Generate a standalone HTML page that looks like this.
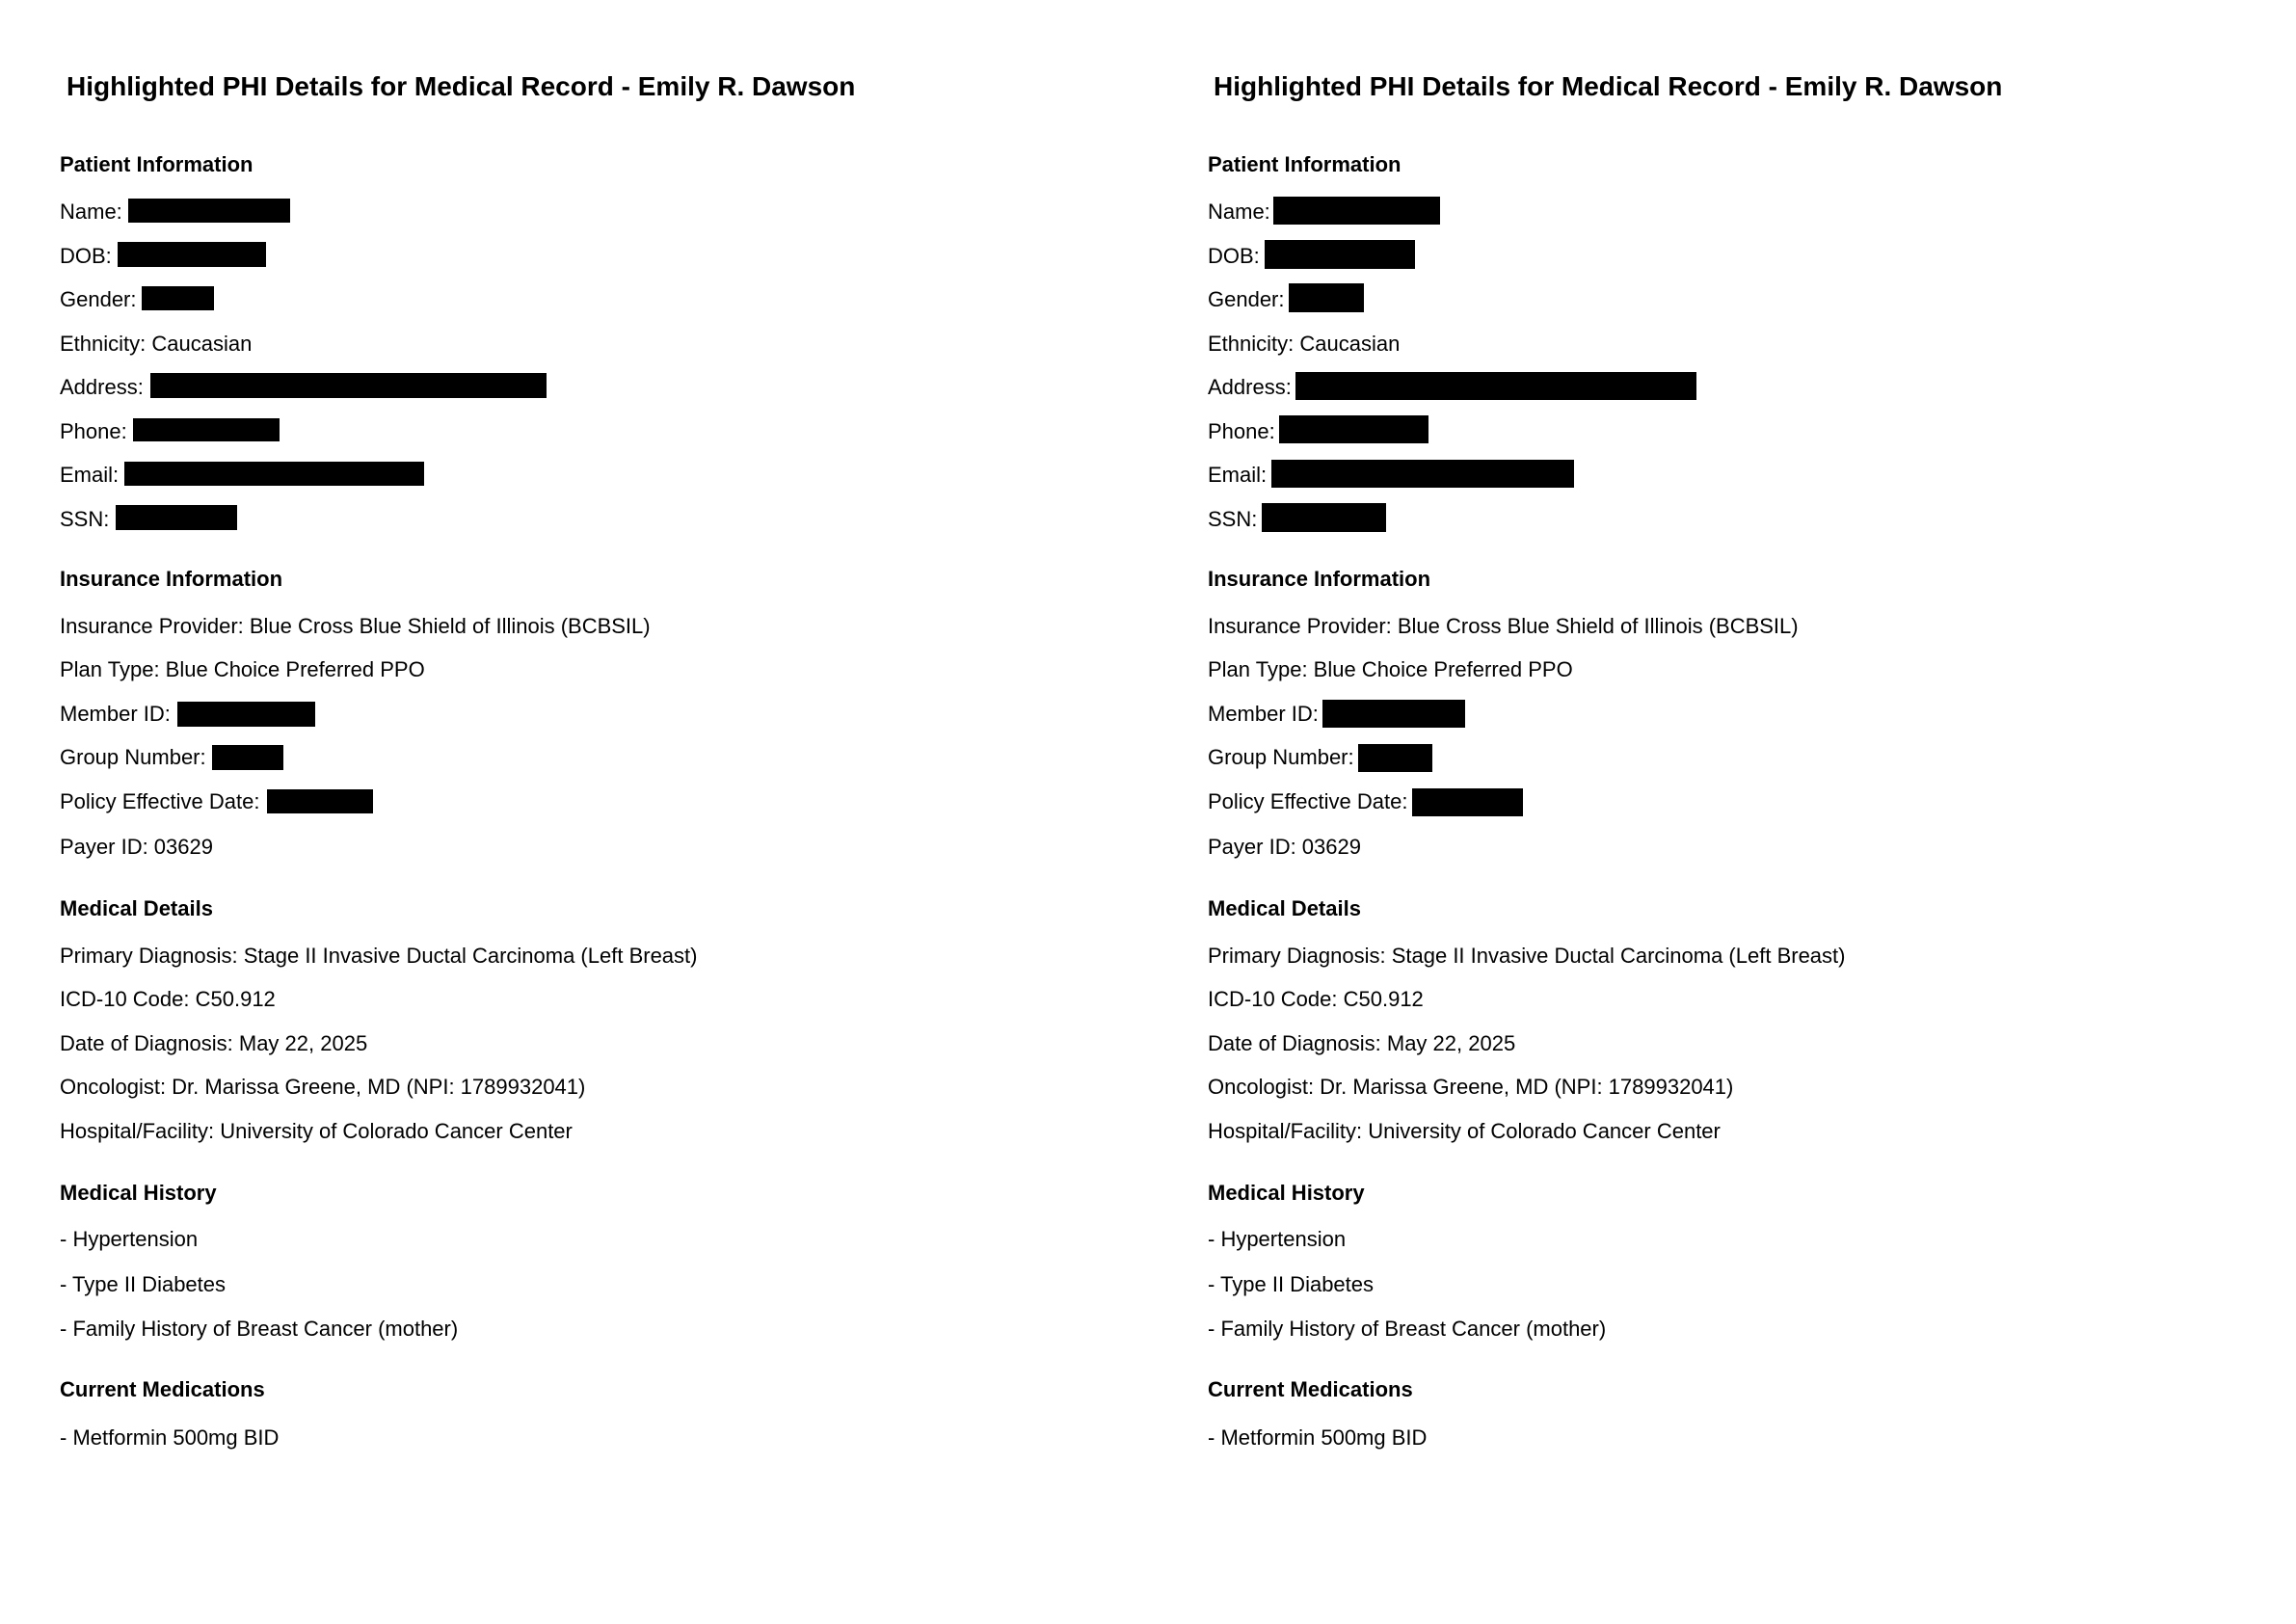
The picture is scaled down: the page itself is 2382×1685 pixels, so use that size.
<!DOCTYPE html>
<html><head><meta charset="utf-8"><style>
html,body{margin:0;padding:0;background:#fff;}
body{width:2382px;height:1685px;position:relative;overflow:hidden;font-family:"Liberation Sans",Arial,sans-serif;color:#000;}
.t{position:absolute;white-space:nowrap;font-size:22px;line-height:26px;height:26px;}
.h{font-weight:bold;}
.ti{position:absolute;white-space:nowrap;font-size:28px;font-weight:bold;line-height:32px;}
.b{position:absolute;background:#000;}
</style></head><body>

<!-- LEFT -->
<div class="ti" style="left:69px;top:74px">Highlighted PHI Details for Medical Record - Emily R. Dawson</div>
<div class="t h" style="left:62px;top:158px">Patient Information</div>
<div class="t" style="left:62px;top:207px">Name:</div>
<div class="t" style="left:62px;top:253px">DOB:</div>
<div class="t" style="left:62px;top:298px">Gender:</div>
<div class="t" style="left:62px;top:344px">Ethnicity: Caucasian</div>
<div class="t" style="left:62px;top:389px">Address:</div>
<div class="t" style="left:62px;top:435px">Phone:</div>
<div class="t" style="left:62px;top:480px">Email:</div>
<div class="t" style="left:62px;top:526px">SSN:</div>
<div class="b" style="left:133px;top:206px;width:168px;height:25px"></div>
<div class="b" style="left:122px;top:251px;width:154px;height:26px"></div>
<div class="b" style="left:147px;top:297px;width:75px;height:25px"></div>
<div class="b" style="left:156px;top:387px;width:411px;height:26px"></div>
<div class="b" style="left:138px;top:434px;width:152px;height:24px"></div>
<div class="b" style="left:129px;top:479px;width:311px;height:25px"></div>
<div class="b" style="left:120px;top:524px;width:126px;height:26px"></div>

<div class="t h" style="left:62px;top:588px">Insurance Information</div>
<div class="t" style="left:62px;top:637px">Insurance Provider: Blue Cross Blue Shield of Illinois (BCBSIL)</div>
<div class="t" style="left:62px;top:682px">Plan Type: Blue Choice Preferred PPO</div>
<div class="t" style="left:62px;top:728px">Member ID:</div>
<div class="t" style="left:62px;top:773px">Group Number:</div>
<div class="t" style="left:62px;top:819px">Policy Effective Date:</div>
<div class="t" style="left:62px;top:866px">Payer ID: 03629</div>
<div class="b" style="left:184px;top:728px;width:143px;height:26px"></div>
<div class="b" style="left:220px;top:773px;width:74px;height:26px"></div>
<div class="b" style="left:277px;top:819px;width:110px;height:25px"></div>

<div class="t h" style="left:62px;top:930px">Medical Details</div>
<div class="t" style="left:62px;top:979px">Primary Diagnosis: Stage II Invasive Ductal Carcinoma (Left Breast)</div>
<div class="t" style="left:62px;top:1024px">ICD-10 Code: C50.912</div>
<div class="t" style="left:62px;top:1070px">Date of Diagnosis: May 22, 2025</div>
<div class="t" style="left:62px;top:1115px">Oncologist: Dr. Marissa Greene, MD (NPI: 1789932041)</div>
<div class="t" style="left:62px;top:1161px">Hospital/Facility: University of Colorado Cancer Center</div>

<div class="t h" style="left:62px;top:1225px">Medical History</div>
<div class="t" style="left:62px;top:1273px">- Hypertension</div>
<div class="t" style="left:62px;top:1320px">- Type II Diabetes</div>
<div class="t" style="left:62px;top:1366px">- Family History of Breast Cancer (mother)</div>

<div class="t h" style="left:62px;top:1429px">Current Medications</div>
<div class="t" style="left:62px;top:1479px">- Metformin 500mg BID</div>

<!-- RIGHT -->
<div class="ti" style="left:1259px;top:74px">Highlighted PHI Details for Medical Record - Emily R. Dawson</div>
<div class="t h" style="left:1253px;top:158px">Patient Information</div>
<div class="t" style="left:1253px;top:207px">Name:</div>
<div class="t" style="left:1253px;top:253px">DOB:</div>
<div class="t" style="left:1253px;top:298px">Gender:</div>
<div class="t" style="left:1253px;top:344px">Ethnicity: Caucasian</div>
<div class="t" style="left:1253px;top:389px">Address:</div>
<div class="t" style="left:1253px;top:435px">Phone:</div>
<div class="t" style="left:1253px;top:480px">Email:</div>
<div class="t" style="left:1253px;top:526px">SSN:</div>
<div class="b" style="left:1321px;top:204px;width:173px;height:29px"></div>
<div class="b" style="left:1312px;top:249px;width:156px;height:30px"></div>
<div class="b" style="left:1337px;top:294px;width:78px;height:30px"></div>
<div class="b" style="left:1344px;top:386px;width:416px;height:29px"></div>
<div class="b" style="left:1327px;top:431px;width:155px;height:29px"></div>
<div class="b" style="left:1319px;top:477px;width:314px;height:29px"></div>
<div class="b" style="left:1309px;top:522px;width:129px;height:30px"></div>

<div class="t h" style="left:1253px;top:588px">Insurance Information</div>
<div class="t" style="left:1253px;top:637px">Insurance Provider: Blue Cross Blue Shield of Illinois (BCBSIL)</div>
<div class="t" style="left:1253px;top:682px">Plan Type: Blue Choice Preferred PPO</div>
<div class="t" style="left:1253px;top:728px">Member ID:</div>
<div class="t" style="left:1253px;top:773px">Group Number:</div>
<div class="t" style="left:1253px;top:819px">Policy Effective Date:</div>
<div class="t" style="left:1253px;top:866px">Payer ID: 03629</div>
<div class="b" style="left:1372px;top:726px;width:148px;height:29px"></div>
<div class="b" style="left:1409px;top:772px;width:77px;height:29px"></div>
<div class="b" style="left:1465px;top:818px;width:115px;height:29px"></div>

<div class="t h" style="left:1253px;top:930px">Medical Details</div>
<div class="t" style="left:1253px;top:979px">Primary Diagnosis: Stage II Invasive Ductal Carcinoma (Left Breast)</div>
<div class="t" style="left:1253px;top:1024px">ICD-10 Code: C50.912</div>
<div class="t" style="left:1253px;top:1070px">Date of Diagnosis: May 22, 2025</div>
<div class="t" style="left:1253px;top:1115px">Oncologist: Dr. Marissa Greene, MD (NPI: 1789932041)</div>
<div class="t" style="left:1253px;top:1161px">Hospital/Facility: University of Colorado Cancer Center</div>

<div class="t h" style="left:1253px;top:1225px">Medical History</div>
<div class="t" style="left:1253px;top:1273px">- Hypertension</div>
<div class="t" style="left:1253px;top:1320px">- Type II Diabetes</div>
<div class="t" style="left:1253px;top:1366px">- Family History of Breast Cancer (mother)</div>

<div class="t h" style="left:1253px;top:1429px">Current Medications</div>
<div class="t" style="left:1253px;top:1479px">- Metformin 500mg BID</div>

</body></html>
